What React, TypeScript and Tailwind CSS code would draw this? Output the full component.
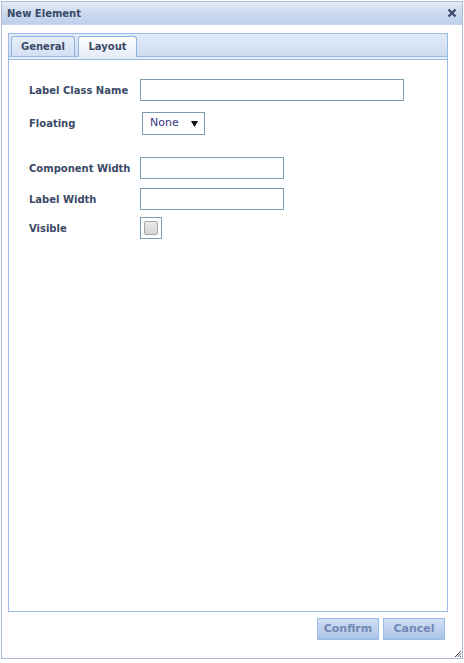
import React from 'react';

const font = { fontFamily: '"Liberation Sans", Arial, sans-serif' };
const labelFont = { fontFamily: '"DejaVu Sans", Verdana, sans-serif' };

const Row: React.FC<{ label: string; className?: string; children: React.ReactNode }> = ({ label, className, children }) => (
  <div className={`flex items-center ${className ?? ''}`}>
    <div className="w-[111px] shrink-0 text-[10px] font-bold text-[#3b4a66]" style={labelFont}>{label}</div>
    {children}
  </div>
);

const App: React.FC = () => {
  return (
    <div className="w-[464px] h-[663px] bg-white pt-[1px] pl-[1px]" style={font}>
      <div className="relative w-[462px] h-[658px] border border-[#a9b9d6] flex flex-col bg-white">
        {/* title bar */}
        <div className="h-[23px] flex items-center justify-between pl-[5px] pr-[4px] bg-gradient-to-b from-[#e4ebf6] via-[#cddbef] to-[#bccfeb] border-b border-[#c5d3e8]">
          <span className="text-[10px] font-bold text-[#3a4a68]" style={labelFont}>New Element</span>
          <svg width="10" height="10" viewBox="0 0 10 10" className="mr-[1px]">
            <path d="M1.5 1.5 L8.5 8.5 M8.5 1.5 L1.5 8.5" stroke="#3d4c6b" strokeWidth="2.4" />
          </svg>
        </div>

        <div className="flex-1 flex flex-col pt-[8px] pl-[6px]">
          {/* tab panel */}
          <div className="w-[440px] h-[579px] border border-[#99bbe8] flex flex-col">
            <div className="h-[23px] flex items-end gap-[3px] pl-[2px] bg-gradient-to-b from-[#e3ebf7] to-[#cedcf0] border-b border-[#99bbe8]">
              <div className="h-[20px] w-[64px] flex items-center justify-center rounded-t-[3px] border border-b-0 border-[#8db2e3] bg-gradient-to-b from-[#e6eef9] to-[#d3e0f2] text-[10px] font-bold text-[#3b4a66]" style={labelFont}>
                General
              </div>
              <div className="h-[21px] w-[59px] flex items-center justify-center rounded-t-[3px] border border-b-0 border-[#8db2e3] bg-gradient-to-b from-[#ffffff] to-[#e4ecf8] text-[10px] font-bold text-[#3b4a66] -mb-[1px] pb-[1px]" style={labelFont}>
                Layout
              </div>
            </div>
            <div className="h-[3px] bg-[#e4ecf8] border-b border-[#99bbe8]" />

            <div className="flex flex-col pl-[20px] pt-[19px]">
              <Row label="Label Class Name">
                <div className="w-[264px] h-[22px] border border-[#7d9db3] bg-white" />
              </Row>
              <Row label="Floating" className="mt-[11px]">
                <div className="ml-[2px] w-[63px] h-[23px] border border-[#7d9db3] bg-white flex items-center justify-between pl-[7px] pr-[6px]">
                  <span className="text-[11px] text-[#3b3a86]" style={{ fontFamily: '"DejaVu Sans", sans-serif' }}>None</span>
                  <svg width="7" height="6" viewBox="0 0 7 6">
                    <path d="M0 0 H7 L3.5 6 Z" fill="#111" />
                  </svg>
                </div>
              </Row>
              <Row label="Component Width" className="mt-[22px]">
                <div className="w-[144px] h-[22px] border border-[#7d9db3] bg-white" />
              </Row>
              <Row label="Label Width" className="mt-[9px]">
                <div className="w-[144px] h-[22px] border border-[#7d9db3] bg-white" />
              </Row>
              <Row label="Visible" className="mt-[7px]">
                <div className="w-[22px] h-[22px] border border-[#7d9db3] bg-white flex items-start pl-[3px] pt-[3px]">
                  <div className="w-[14px] h-[14px] rounded-[2px] border border-[#a7a7a7] bg-gradient-to-b from-[#e9e9e9] to-[#d6d6d6]" />
                </div>
              </Row>
            </div>
          </div>

          {/* buttons */}
          <div className="flex justify-end gap-[4px] w-[437px] mt-[6px]">
            <button className="w-[62px] h-[22px] border border-[#99bbe8] bg-gradient-to-b from-[#d0def3] to-[#adc5e9] text-[11px] font-bold text-[#7288b4]" style={labelFont}>
              Confirm
            </button>
            <button className="w-[62px] h-[22px] border border-[#99bbe8] bg-gradient-to-b from-[#d0def3] to-[#adc5e9] text-[11px] font-bold text-[#7288b4]" style={labelFont}>
              Cancel
            </button>
          </div>
        </div>

        {/* resize grip */}
        <svg className="absolute right-0 bottom-0" width="8" height="8" viewBox="0 0 8 8">
          <path d="M7 1 L1 7 M7 3.5 L3.5 7 M7 6 L6 7" stroke="#444" strokeWidth="1" />
        </svg>
      </div>
    </div>
  );
};

export default App;
